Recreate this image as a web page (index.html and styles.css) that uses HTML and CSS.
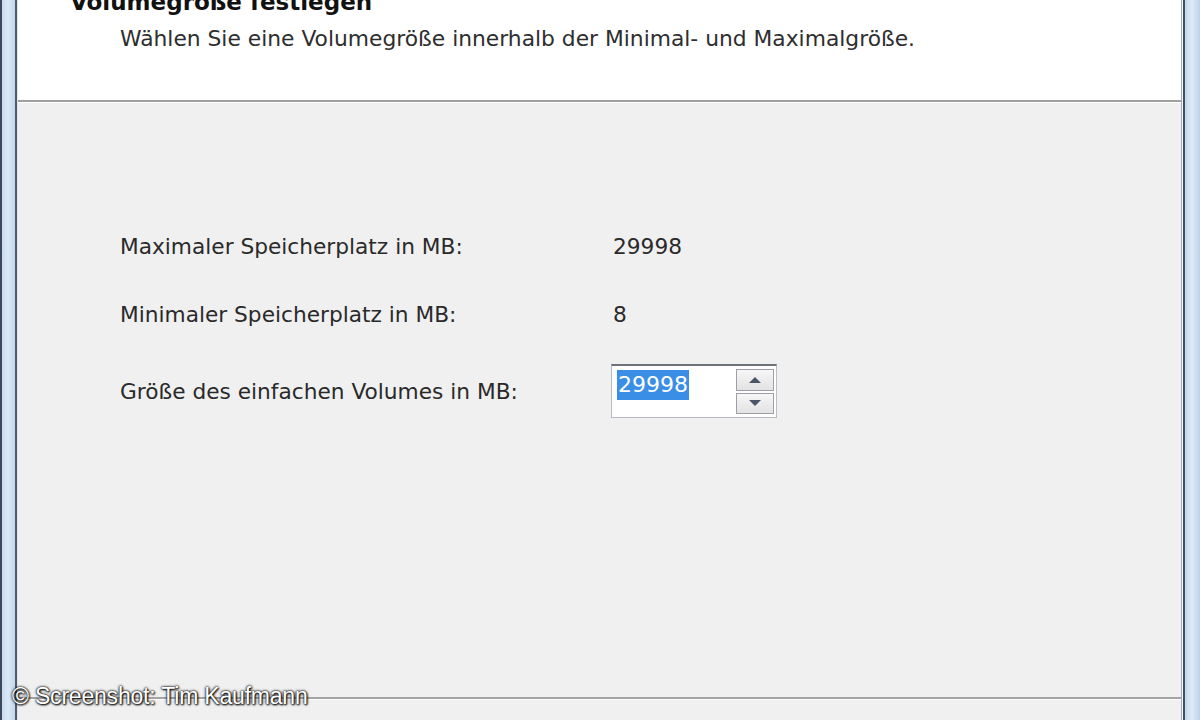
FILE: index.html
```html
<!DOCTYPE html>
<html lang="de">
<head>
    <meta charset="UTF-8">
    <title>Volumegröße festlegen</title>
    <link rel="stylesheet" href="styles.css">
</head>
<body>
    <div class="window">
        <div class="frame frame-left"></div>
        <div class="dialog">
            <div class="header">
                <h1 class="title">Volumegröße festlegen</h1>
                <p class="subtitle">Wählen Sie eine Volumegröße innerhalb der Minimal- und Maximalgröße.</p>
            </div>
            <div class="content">
                <div class="form">
                    <div class="row">
                        <span class="label">Maximaler Speicherplatz in MB:</span>
                        <span class="value">29998</span>
                    </div>
                    <div class="row">
                        <span class="label">Minimaler Speicherplatz in MB:</span>
                        <span class="value">8</span>
                    </div>
                    <div class="row row-input">
                        <span class="label">Größe des einfachen Volumes in MB:</span>
                        <div class="spinbox">
                            <div class="spin-field"><span class="selected">29998</span></div>
                            <div class="spin-buttons">
                                <div class="spin-btn"><span class="arrow-up"></span></div>
                                <div class="spin-btn"><span class="arrow-down"></span></div>
                            </div>
                        </div>
                    </div>
                </div>
            </div>
            <div class="footer"></div>
        </div>
        <div class="frame frame-right"></div>
    </div>
    <div class="credit">© Screenshot: Tim Kaufmann</div>
</body>
</html>
```

FILE: styles.css
```css
* {
    margin: 0;
    padding: 0;
    box-sizing: border-box;
}

body {
    width: 1200px;
    height: 720px;
    overflow: hidden;
    position: relative;
    font-family: "DejaVu Sans", "Liberation Sans", sans-serif;
    color: #2a2a2a;
    background: #f0f0f0;
}

.window {
    display: flex;
    height: 720px;
}

.frame {
    width: 18px;
    flex-shrink: 0;
}

.frame-left {
    background: linear-gradient(to right, #3c4a5c 0, #3c4a5c 2px, #c9dcef 2px, #dde9f6 8px, #c2d6ea 15px, #4d5c6e 15px, #4d5c6e 17px, #dfe3e8 17px);
}

.frame-right {
    width: 19px;
    background: linear-gradient(to right, #a8acb0 0, #a8acb0 1px, #f4f6f8 1px, #f4f6f8 2px, #3f4e60 2px, #3f4e60 4px, #c4d8ec 4px, #deebf7 11px, #bcd2e8 19px);
}

.dialog {
    flex: 1;
    display: flex;
    flex-direction: column;
}

.header {
    height: 102px;
    background: #fff;
    border-bottom: 2px solid #a0a0a0;
    box-shadow: 0 1px 0 #fff;
}

.title {
    font-size: 23px;
    font-weight: bold;
    color: #111;
    margin: -11px 0 0 52px;
    line-height: 26px;
}

.subtitle {
    font-size: 21.8px;
    margin: 10px 0 0 102px;
    line-height: 28px;
    color: #2e2e2e;
}

.content {
    flex: 1;
    padding: 130px 0 0 102px;
}

.form {
    display: flex;
    flex-direction: column;
    gap: 40px;
}

.row {
    display: flex;
    align-items: center;
    height: 28px;
    font-size: 21.7px;
}

.row-input {
    margin-top: -4px;
    height: 54px;
}

.label {
    width: 493px;
}

.spinbox {
    display: flex;
    width: 166px;
    height: 54px;
    border: 1px solid #b8bcc2;
    border-top: 2px solid #6d7178;
    background: #fff;
    margin-left: -2px;
}

.spin-field {
    flex: 1;
    padding: 4px 0 0 5px;
}

.selected {
    background: #3a8ee6;
    color: #fff;
    font-size: 22px;
    line-height: 30px;
    display: inline-block;
    padding: 0 1px;
}

.spin-buttons {
    width: 40px;
    padding: 3px 2px 3px 0;
    display: flex;
    flex-direction: column;
    gap: 2px;
}

.spin-btn {
    flex: 1;
    border: 1px solid #9ca0a6;
    background: linear-gradient(#f6f6f6, #e3e3e3);
    display: flex;
    align-items: center;
    justify-content: center;
}

.arrow-up {
    border-left: 6px solid transparent;
    border-right: 6px solid transparent;
    border-bottom: 6px solid #4a5566;
}

.arrow-down {
    border-left: 6px solid transparent;
    border-right: 6px solid transparent;
    border-top: 6px solid #4a5566;
}

.footer {
    height: 23px;
    border-top: 2px solid #a4a4a4;
    box-shadow: inset 0 1px 0 #fff;
}

.credit {
    position: absolute;
    left: 12px;
    top: 683px;
    font-family: "Liberation Sans", Arial, sans-serif;
    font-size: 23px;
    color: #fff;
    letter-spacing: -0.2px;
    text-shadow: 0 0 2px #000, 0 0 3px #222, 1px 1px 2px #000;
}
```
